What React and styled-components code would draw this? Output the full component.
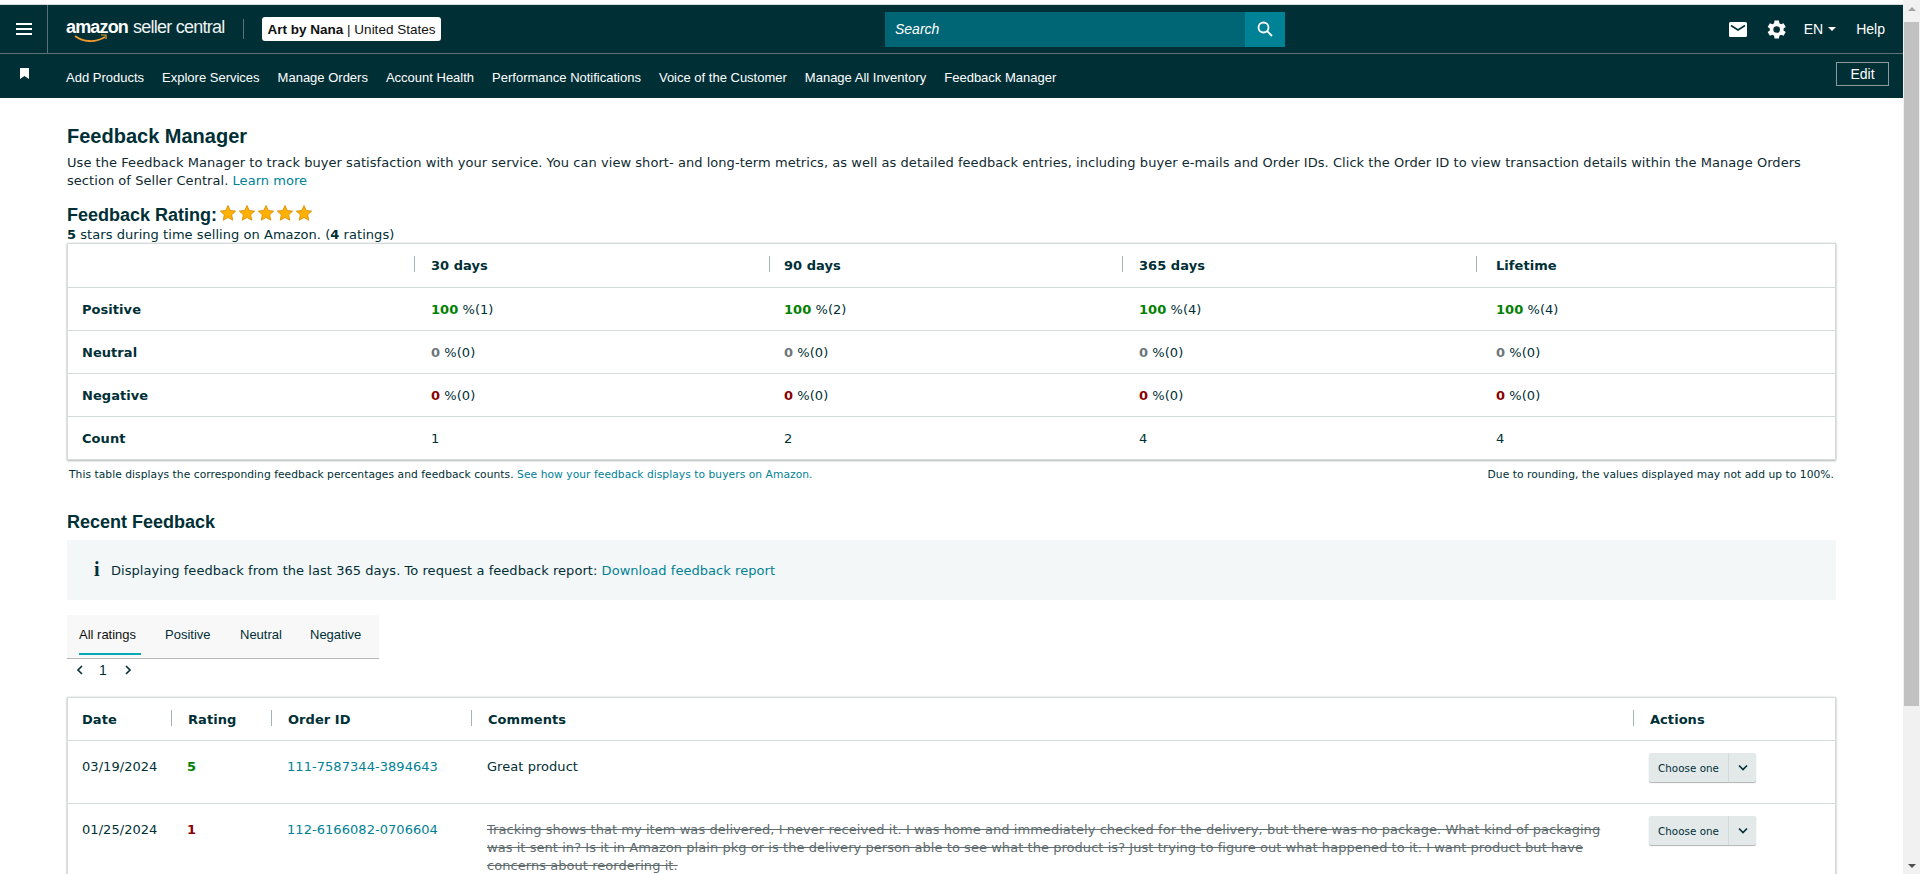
import React from 'react';
import styled, { createGlobalStyle } from 'styled-components';

const Global = createGlobalStyle`
  html, body { margin: 0; padding: 0; height: 874px; overflow: hidden; background: #fff; }
  * { box-sizing: border-box; }
  #root { height: 874px; }
`;
const Shell = styled.div`display: flex; height: 874px; overflow: hidden; font-family: "DejaVu Sans", Verdana, sans-serif; font-size: 13px; letter-spacing: .05px; color: #002f36;`;
const Page = styled.div`width: 1903px; flex: none; height: 874px; overflow: hidden; border-top: 4px solid #fff;`;
const ScrollTrack = styled.div`width: 17px; flex: none; background: #f1f1f1; display: flex; flex-direction: column; align-items: center; padding-top: 0;`;
const ScrollArrow = styled.div`height: 17px; flex: none; width: 100%; display: flex; align-items: center; justify-content: center;
  &::before { content: ""; border-left: 4px solid transparent; border-right: 4px solid transparent; ${p => p.$down ? 'border-top: 4px solid #505050;' : 'border-bottom: 4px solid #a3a3a3;'} }`;
const ScrollThumb = styled.div`width: 15px; height: 684px; background: #c1c1c1; margin-top: 5px;`;
const ScrollGap = styled.div`flex: 1;`;

const TopBar = styled.header`height: 50px; background: #002f36; border-top: 1px solid #d5dbdb; border-bottom: 1px solid #5b7175; display: flex; align-items: stretch; color: #fff; font-family: "Liberation Sans", Arial, sans-serif; letter-spacing: 0;`;
const MenuCell = styled.div`width: 48px; flex: none; border-right: 1px solid #5b7175; display: flex; align-items: center; justify-content: center;`;
const Logo = styled.div`position: relative; margin-left: 18px; width: 159px; flex: none; display: flex; align-items: baseline; padding-top: 12px; white-space: nowrap; line-height: 20px;`;
const LogoBrand = styled.span`font-size: 18px; font-weight: 700; letter-spacing: -0.85px;`;
const LogoProduct = styled.span`font-size: 18px; margin-left: 5px; letter-spacing: -0.75px; color: #eef2f2;`;
const LogoSmile = styled.svg`position: absolute; left: 8px; top: 29px;`;
const BarRule = styled.div`width: 1px; height: 20px; background: #5b7175; align-self: center; margin-left: 18px; flex: none;`;
const SellerBadge = styled.div`margin-left: 18px; align-self: center; width: 179px; height: 24px; border-radius: 3px; background: #fff; color: #0f1111; font-size: 13.5px; display: flex; align-items: center; justify-content: center; white-space: nowrap; flex: none;`;
const SearchWrap = styled.div`margin-left: 444px; align-self: center; display: flex; height: 35px; width: 400px; flex: none;`;
const SearchField = styled.div`width: 360px; background: #006574; color: #fff; font-style: italic; font-size: 14px; display: flex; align-items: center; padding-left: 10px;`;
const SearchButton = styled.div`width: 40px; background: #008296; display: flex; align-items: center; justify-content: center;`;
const TopRight = styled.div`margin-left: auto; padding-right: 18px; display: flex; align-items: center; font-size: 14px;`;
const MailIcon = styled.svg`margin-right: 20px; display: block;`;
const GearIcon = styled.svg`margin-right: 18px; display: block;`;
const Lang = styled.span`display: flex; align-items: center; gap: 5px; margin-right: 20px;`;
const Caret = styled.span`width: 0; height: 0; border-left: 4px solid transparent; border-right: 4px solid transparent; border-top: 4px solid #fff;`;

const NavBar = styled.nav`height: 44px; background: #002f36; display: flex; align-items: center; color: #fff; font-family: "Liberation Sans", Arial, sans-serif; font-size: 13px; letter-spacing: 0;`;
const PinCell = styled.div`width: 48px; flex: none; display: flex; justify-content: center; margin-top: -5px;`;
const NavItems = styled.div`margin-left: 18px; display: flex; gap: 18px; white-space: nowrap; margin-top: 3px;`;
const EditButton = styled.div`margin-left: auto; margin-right: 14px; margin-top: -4px; width: 53px; height: 24px; border: 1px solid #8a9a9d; display: flex; align-items: center; justify-content: center; font-size: 14px;`;

const Content = styled.main`padding: 0 0 0 67px; width: 1836px;`;
const Title = styled.h1`margin: 0; padding-top: 27px; font: 700 20px/23px "Liberation Sans", Arial, sans-serif; letter-spacing: 0; color: #002f36;`;
const Intro = styled.p`margin: 6px 0 0; line-height: 18px; color: #0f2a30; font-size: 13px;`;
const Link = styled.a`color: #008296; text-decoration: none;`;
const RatingHead = styled.div`margin-top: 14px; display: flex; align-items: flex-start; height: 23px;`;
const RatingTitle = styled.h2`margin: 0; font: 700 18px/23px "Liberation Sans", Arial, sans-serif; letter-spacing: 0;`;
const Stars = styled.svg`margin: 1px 0 0 3px; display: block;`;
const RatingNote = styled.div`line-height: 16px; margin-top: 0;`;

const Card = styled.section`margin-top: ${p => p.$top || 0}px; background: #fff; border: 1px solid #d5dbdb; box-shadow: 0 1px 2px rgba(0,0,0,.25), 0 0 2px rgba(0,0,0,.12);`;
const SummaryRow = styled.div`display: grid; grid-template-columns: 363px 353px 355px 357px 1fr; height: 43px; align-items: center; border-top: ${p => p.$first ? 'none' : '1px solid #d5dbdb'};`;
const SummaryHead = styled.div`font-weight: 700; position: relative; height: 100%; display: flex; align-items: center;
  &::before { content: ""; position: absolute; left: -${p => p.$rule}px; top: 12px; height: 16px; width: 1px; background: #a6b3b5; }`;
const HeadCell = styled.div`font-weight: 700; padding-left: ${p => p.$pl ?? 17}px; position: relative; height: 100%; display: flex; align-items: center;
  &::before { content: ""; position: absolute; left: 0; top: 12px; height: 16px; width: 1px; background: #a6b3b5; display: ${p => p.$noRule ? 'none' : 'block'}; }`;
const RowLabel = styled.div`font-weight: 700; padding-left: 14px;`;
const Num = styled.b`color: ${p => p.$c};`;
const Notes = styled.div`margin-top: 8px; display: flex; justify-content: space-between; font-size: 10.7px; line-height: 14px; padding: 0 2px; color: #002f36;`;
const SectionTitle = styled.h2`margin: 0; padding-top: 28px; font: 700 18px/24px "Liberation Sans", Arial, sans-serif; letter-spacing: 0;`;
const InfoBox = styled.div`margin-top: 6px; height: 60px; background: #f4f7f8; display: flex; align-items: center; padding-left: 27px; gap: 10px;`;
const InfoI = styled.span`font: 700 20px/20px "Liberation Serif", serif; width: 7px; margin-top: -3px;`;
const Tabs = styled.div`margin-top: 15px; width: 312px; height: 44px; background: #f8f8f8; border-bottom: 1px solid #b5b8b8; display: flex; padding-left: 12px; font: 13px "Liberation Sans", Arial, sans-serif; letter-spacing: 0;`;
const Tab = styled.div`height: 43px; display: flex; align-items: center; padding-bottom: 5px; position: relative; margin-right: ${p => p.$gap}px; width: ${p => p.$w}px; color: ${p => p.$on ? '#0f1111' : '#002f36'};
  ${p => p.$on && `&::after { content: ""; position: absolute; left: 0; right: 0; bottom: 3px; height: 2px; background: #00a8b8; }`}`;
const Pager = styled.div`height: 21px; display: flex; align-items: center; padding-left: 9px; font: 14px "Liberation Sans", Arial, sans-serif; letter-spacing: 0;`;
const PagerNum = styled.span`margin: 0 17px 0 15px;`;
const FeedHead = styled.div`display: grid; grid-template-columns: 103px 100px 200px 1162px 1fr; height: 43px; align-items: center; border-bottom: 1px solid #d5dbdb;`;
const FeedRow = styled.div`display: grid; grid-template-columns: 103px 100px 200px 1162px 1fr; height: ${p => p.$h}px; padding-top: 12px; border-bottom: 1px solid #d5dbdb; align-items: start; line-height: 18px;`;
const FeedCell = styled.div`padding-left: ${p => p.$pl ?? 16}px; padding-top: 5px;`;
const Comment = styled.div`padding-left: 16px; padding-top: 5px; padding-right: 22px; ${p => p.$struck && 'text-decoration: line-through; color: #5f6c6e;'}`;
const Action = styled.div`margin-left: 16px; width: 107px; height: 29px; background: #e3e9e9; border-radius: 2px; box-shadow: 0 1px 1px rgba(0,0,0,.3); display: flex; font-size: 10.3px;`;
const ActionLabel = styled.div`width: 80px; border-right: 1px solid #d2dada; display: flex; align-items: center; justify-content: center;`;
const ActionArrow = styled.div`flex: 1; display: flex; align-items: center; justify-content: center;`;

const Chevron = ({ d = 'M1 1.500L5 5.500l4-4', w = 10, h = 7 }) => (
  <svg width={w} height={h} viewBox={`0 0 ${w} ${h}`} fill="none" stroke="#002f36" strokeWidth="1.6"><path d={d} /></svg>
);
const Star = ({ x }) => (
  <path transform={`translate(${x} 0)`} d="M8 .5l2.300 5 5.400.6-4 3.700 1.100 5.400L8 12.500l-4.800 2.700 1.100-5.400-4-3.700 5.400-.6z" fill="#ffb000" stroke="#d68a00" strokeWidth=".8" />
);
const windows = [['30 days', 17], ['90 days', 15], ['365 days', 17], ['Lifetime', 20]];
const counts = [1, 2, 4, 4];
const STRUCK = 'Tracking shows that my item was delivered, I never received it. I was home and immediately checked for the delivery, but there was no package. What kind of packaging was it sent in? Is it in Amazon plain pkg or is the delivery person able to see what the product is? Just trying to figure out what happened to it. I want product but have concerns about reordering it.';

const ChooseOne = () => (
  <Action>
    <ActionLabel>Choose one</ActionLabel>
    <ActionArrow><Chevron /></ActionArrow>
  </Action>
);

export default function App() {
  return (
    <Shell>
      <Global />
      <Page>
        <TopBar>
          <MenuCell>
            <svg width="16" height="12" viewBox="0 0 16 12" fill="#fff"><rect width="16" height="2" y="0" /><rect width="16" height="2" y="5" /><rect width="16" height="2" y="10" /></svg>
          </MenuCell>
          <Logo>
            <LogoBrand>amazon</LogoBrand><LogoProduct>seller central</LogoProduct>
            <LogoSmile width="34" height="10" viewBox="0 0 34 10" fill="none"><path d="M1 2c8 6 20 7 30 1" stroke="#f29a2e" strokeWidth="1.8" /><path d="M27 1h5v4" stroke="#f29a2e" strokeWidth="1.2" /></LogoSmile>
          </Logo>
          <BarRule />
          <SellerBadge><b>Art by Nana</b>&nbsp;|&nbsp;United States</SellerBadge>
          <SearchWrap>
            <SearchField>Search</SearchField>
            <SearchButton>
              <svg width="16" height="16" viewBox="0 0 16 16" fill="none" stroke="#fff" strokeWidth="1.8"><circle cx="6.5" cy="6.500" r="5" /><path d="M10.200 10.200L15 15" /></svg>
            </SearchButton>
          </SearchWrap>
          <TopRight>
            <MailIcon width="18" height="15" viewBox="0 0 18 15"><rect width="18" height="15" rx="1.5" fill="#fff" /><path d="M2 3.500l7 4.500 7-4.500" fill="none" stroke="#002f36" strokeWidth="1.6" /></MailIcon>
            <GearIcon width="19" height="19" viewBox="2 2 20 20"><path fill="#fff" d="M19.400 13a7.500 7.500 0 0 0 0-2l2.300-1.700-2.300-4-2.600 1.100a7.600 7.600 0 0 0-1.800-1L14.600 2.600H9.900L9.500 5.400a7.600 7.600 0 0 0-1.800 1L5 5.300 2.700 9.300 5 11a7.500 7.500 0 0 0 0 2l-2.300 1.700 2.300 4 2.700-1.100a7.600 7.600 0 0 0 1.800 1l.4 2.800h4.700l.4-2.800a7.600 7.600 0 0 0 1.800-1l2.600 1.100 2.300-4zM12.200 15.500a3.500 3.500 0 1 1 0-7 3.500 3.500 0 0 1 0 7z" /></GearIcon>
            <Lang>EN <Caret /></Lang>
            <span>Help</span>
          </TopRight>
        </TopBar>
        <NavBar>
          <PinCell><svg width="9" height="11" viewBox="0 0 9 11" fill="#fff"><path d="M0 0h9v11L4.500 8 0 11z" /></svg></PinCell>
          <NavItems>
            {['Add Products', 'Explore Services', 'Manage Orders', 'Account Health', 'Performance Notifications', 'Voice of the Customer', 'Manage All Inventory', 'Feedback Manager'].map(t => <span key={t}>{t}</span>)}
          </NavItems>
          <EditButton>Edit</EditButton>
        </NavBar>
        <Content>
          <Title>Feedback Manager</Title>
          <Intro>
            Use the Feedback Manager to track buyer satisfaction with your service. You can view short- and long-term metrics, as well as detailed feedback entries, including buyer e-mails and Order IDs. Click the Order ID to view transaction details within the Manage Orders section of Seller Central. <Link>Learn more</Link>
          </Intro>
          <RatingHead>
            <RatingTitle>Feedback Rating:</RatingTitle>
            <Stars width="93" height="17" viewBox="0 0 93 17">{[0, 19, 38, 57, 76].map(x => <Star key={x} x={x} />)}</Stars>
          </RatingHead>
          <RatingNote><b>5</b> stars during time selling on Amazon. (<b>4</b> ratings)</RatingNote>
          <Card $top={0}>
            <SummaryRow $first>
              <div />
              {windows.map(([w, r]) => <SummaryHead key={w} $rule={r}>{w}</SummaryHead>)}
            </SummaryRow>
            <SummaryRow>
              <RowLabel>Positive</RowLabel>
              {counts.map((n, i) => <div key={i}><Num $c="#008000">100</Num> %({n})</div>)}
            </SummaryRow>
            <SummaryRow>
              <RowLabel>Neutral</RowLabel>
              {counts.map((_, i) => <div key={i}><Num $c="#6c7778">0</Num> %(0)</div>)}
            </SummaryRow>
            <SummaryRow>
              <RowLabel>Negative</RowLabel>
              {counts.map((_, i) => <div key={i}><Num $c="#8b0000">0</Num> %(0)</div>)}
            </SummaryRow>
            <SummaryRow>
              <RowLabel>Count</RowLabel>
              {counts.map((n, i) => <div key={i}>{n}</div>)}
            </SummaryRow>
          </Card>
          <Notes>
            <span>This table displays the corresponding feedback percentages and feedback counts. <Link>See how your feedback displays to buyers on Amazon.</Link></span>
            <span>Due to rounding, the values displayed may not add up to 100%.</span>
          </Notes>
          <SectionTitle>Recent Feedback</SectionTitle>
          <InfoBox>
            <InfoI>i</InfoI>
            <span>Displaying feedback from the last 365 days. To request a feedback report: <Link>Download feedback report</Link></span>
          </InfoBox>
          <Tabs>
            <Tab $on $w={62} $gap={24}>All ratings</Tab>
            <Tab $w={51} $gap={24}>Positive</Tab>
            <Tab $w={46} $gap={24}>Neutral</Tab>
            <Tab $w={56} $gap={0}>Negative</Tab>
          </Tabs>
          <Pager>
            <Chevron d="M6 1L2 5l4 4" w={8} h={10} />
            <PagerNum>1</PagerNum>
            <Chevron d="M2 1l4 4-4 4" w={8} h={10} />
          </Pager>
          <Card $top={17}>
            <FeedHead>
              <HeadCell $noRule $pl={14}>Date</HeadCell>
              <HeadCell>Rating</HeadCell>
              <HeadCell>Order ID</HeadCell>
              <HeadCell>Comments</HeadCell>
              <HeadCell>Actions</HeadCell>
            </FeedHead>
            <FeedRow $h={63}>
              <FeedCell $pl={14}>03/19/2024</FeedCell>
              <FeedCell><Num $c="#008000">5</Num></FeedCell>
              <FeedCell><Link>111-7587344-3894643</Link></FeedCell>
              <Comment>Great product</Comment>
              <ChooseOne />
            </FeedRow>
            <FeedRow $h={120}>
              <FeedCell $pl={14}>01/25/2024</FeedCell>
              <FeedCell><Num $c="#8b0000">1</Num></FeedCell>
              <FeedCell><Link>112-6166082-0706604</Link></FeedCell>
              <Comment $struck>{STRUCK}</Comment>
              <ChooseOne />
            </FeedRow>
          </Card>
        </Content>
      </Page>
      <ScrollTrack>
        <ScrollArrow />
        <ScrollThumb />
        <ScrollGap />
        <ScrollArrow $down />
      </ScrollTrack>
    </Shell>
  );
}
